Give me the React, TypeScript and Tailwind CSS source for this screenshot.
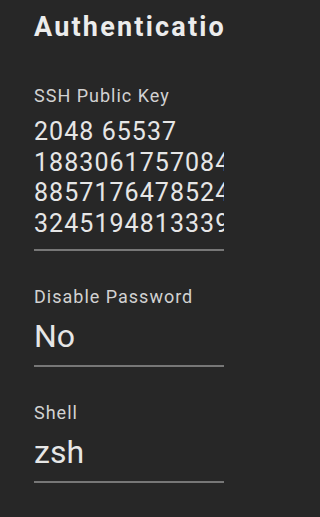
const fields = [
  {
    label: "SSH Public Key",
    value:
      "2048 65537 18830617570847291035526418907734 88571764785247719036254810029315 32451948133390617728405196632187",
    small: true,
  },
  { label: "Disable Password", value: "No", small: false },
  { label: "Shell", value: "zsh", small: false },
];

export default function App() {
  return (
    <div
      className="w-full min-h-[517px] bg-[#272727] text-[#e8e8e8]"
      style={{ fontFamily: "Roboto, 'Liberation Sans', sans-serif" }}
    >
      <div className="w-[224px] min-h-[517px] overflow-hidden pl-[34px] pt-[11px]">
        {/* Header */}
        <h1 className="text-[27px] leading-[32px] font-bold tracking-[2.2px] whitespace-nowrap text-[#ececec]">
          Authentication
        </h1>

        {/* Fields */}
        <div className="mt-[43px] flex flex-col gap-[36px]">
          {fields.map((f) => (
            <div key={f.label} className="border-b-2 border-[#777777] pb-[9px] w-[400px]">
              <div className="text-[18px] leading-[20px] tracking-[1px] text-[#d2d2d2] whitespace-nowrap">
                {f.label}
              </div>
              {f.small ? (
                <div className="mt-[11px] w-[190px] text-[25px] leading-[30.7px] tracking-[1.05px] text-[#e6e6e6]">
                  {f.value}
                </div>
              ) : (
                <div className="mt-[9px] text-[32px] leading-[40px] text-[#e6e6e6]">
                  {f.value}
                </div>
              )}
            </div>
          ))}
        </div>
      </div>
    </div>
  );
}
